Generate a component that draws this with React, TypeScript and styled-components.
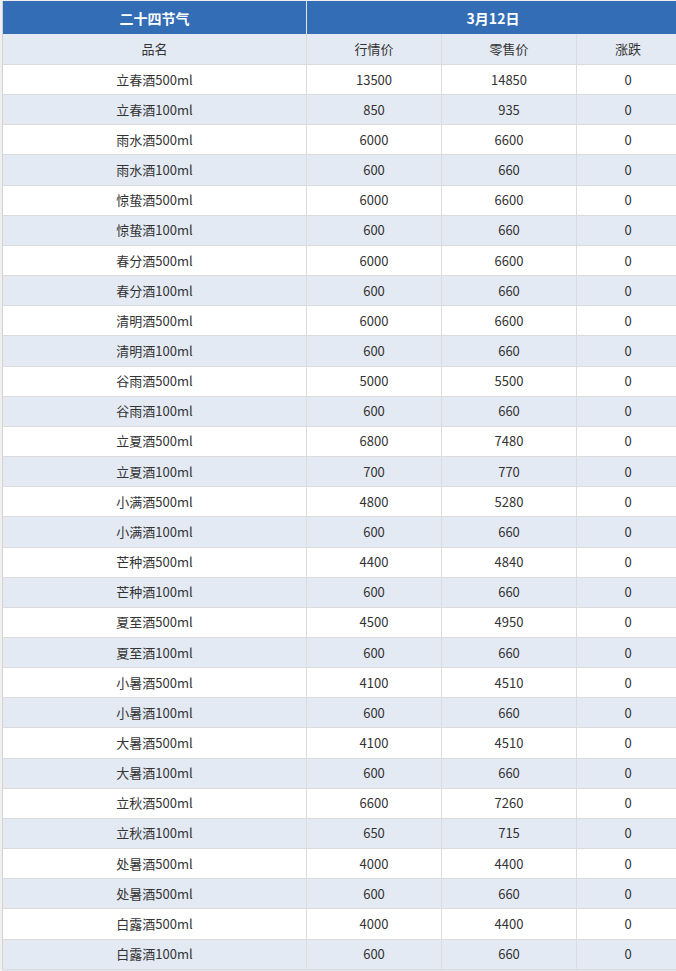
import React from "react";
import styled, { createGlobalStyle } from "styled-components";

const Global = createGlobalStyle`
  html, body { margin: 0; padding: 0; background: #ffffff; }
  body { font-family: "Microsoft YaHei", "Noto Sans CJK SC", "Noto Sans", sans-serif; }
`;

const Page = styled.div`
  width: 676px;
  height: 971px;
  overflow: hidden;
  background: #f0f0f0;
  padding: 0 0 0 2px;
  box-sizing: border-box;
`;

const Table = styled.table`
  border-collapse: collapse;
  table-layout: fixed;
  width: 677px;
  background: #ffffff;
  border-left: 1px solid #d2d2d2;
  border-bottom: 1px solid #b9c2d2;
  font-size: 13px;
  color: #333333;
`;

const HeadCell = styled.th`
  height: 33px;
  padding: 0;
  background: #336db5;
  color: #ffffff;
  font-size: 14px;
  font-weight: bold;
  text-align: center;
  border-top: 1px solid #f0f0f0;
  border-right: 1px solid #e6e6e6;
  border-bottom: 0;
`;

const Row = styled.tr<{ $alt?: boolean }>`
  background: ${(p) => (p.$alt ? "#e4eaf4" : "#ffffff")};
`;

const Cell = styled.td<{ $h?: number }>`
  height: ${(p) => p.$h ?? 29.17}px;
  padding: 0;
  text-align: center;
  vertical-align: middle;
  border-right: 1px solid #dcdcdc;
  border-bottom: 1px solid #dcdcdc;
  line-height: 16px;
`;

const Footer = styled.div`
  height: 10px;
  background: #e2e7ef;
`;

const rows: [string, number, number, number][] = [
  ["立春酒500ml", 13500, 14850, 0],
  ["立春酒100ml", 850, 935, 0],
  ["雨水酒500ml", 6000, 6600, 0],
  ["雨水酒100ml", 600, 660, 0],
  ["惊蛰酒500ml", 6000, 6600, 0],
  ["惊蛰酒100ml", 600, 660, 0],
  ["春分酒500ml", 6000, 6600, 0],
  ["春分酒100ml", 600, 660, 0],
  ["清明酒500ml", 6000, 6600, 0],
  ["清明酒100ml", 600, 660, 0],
  ["谷雨酒500ml", 5000, 5500, 0],
  ["谷雨酒100ml", 600, 660, 0],
  ["立夏酒500ml", 6800, 7480, 0],
  ["立夏酒100ml", 700, 770, 0],
  ["小满酒500ml", 4800, 5280, 0],
  ["小满酒100ml", 600, 660, 0],
  ["芒种酒500ml", 4400, 4840, 0],
  ["芒种酒100ml", 600, 660, 0],
  ["夏至酒500ml", 4500, 4950, 0],
  ["夏至酒100ml", 600, 660, 0],
  ["小暑酒500ml", 4100, 4510, 0],
  ["小暑酒100ml", 600, 660, 0],
  ["大暑酒500ml", 4100, 4510, 0],
  ["大暑酒100ml", 600, 660, 0],
  ["立秋酒500ml", 6600, 7260, 0],
  ["立秋酒100ml", 650, 715, 0],
  ["处暑酒500ml", 4000, 4400, 0],
  ["处暑酒500ml", 600, 660, 0],
  ["白露酒500ml", 4000, 4400, 0],
  ["白露酒100ml", 600, 660, 0],
];

export default function App() {
  return (
    <>
      <Global />
      <Page>
        <Table>
          <colgroup>
            <col style={{ width: 304 }} />
            <col style={{ width: 135 }} />
            <col style={{ width: 135 }} />
            <col style={{ width: 103 }} />
          </colgroup>
          <thead>
            <tr>
              <HeadCell>二十四节气</HeadCell>
              <HeadCell colSpan={3}>3月12日</HeadCell>
            </tr>
          </thead>
          <tbody>
            <Row $alt>
              <Cell $h={30}>品名</Cell>
              <Cell $h={30}>行情价</Cell>
              <Cell $h={30}>零售价</Cell>
              <Cell $h={30}>涨跌</Cell>
            </Row>
            {rows.map((r, i) => (
              <Row key={i} $alt={i % 2 === 1}>
                <Cell>{r[0]}</Cell>
                <Cell>{r[1]}</Cell>
                <Cell>{r[2]}</Cell>
                <Cell>{r[3]}</Cell>
              </Row>
            ))}
          </tbody>
        </Table>
        <Footer />
      </Page>
    </>
  );
}
